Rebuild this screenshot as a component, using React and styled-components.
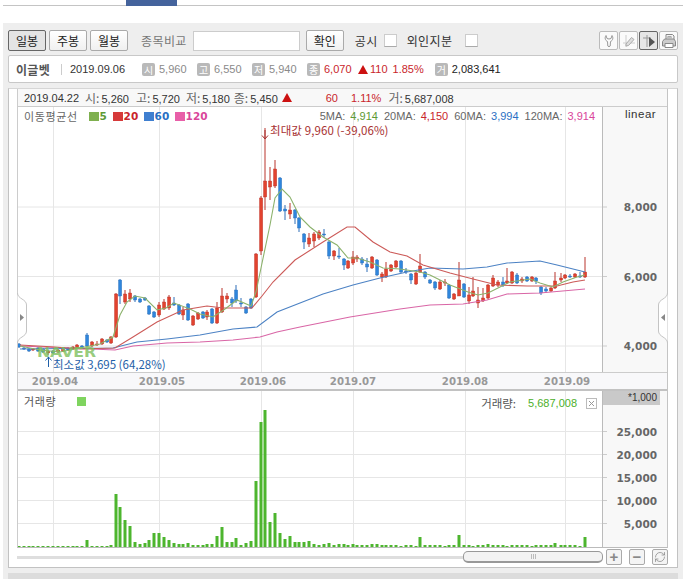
import React from 'react'
import styled, { createGlobalStyle } from 'styled-components'
import { RefreshCw } from 'lucide-react'

const KR = `"Noto Sans CJK KR", "Liberation Sans", sans-serif`
const NUM = `"Liberation Sans", "Noto Sans CJK KR", sans-serif`
const RED = '#c9252b'
const GREEN = '#4caf2a'
const MA_GREEN = '#5e9a35'
const MA_BLUE = '#2a6fc4'
const MA_PINK = '#d9469a'

// x, body top, body bottom, wick top, wick bottom, r/b, volume bar top (page pixels)
const candles = [
  [19,344,347,343,348,'b',545],[24,348,349,347,350,'b',545],[29,349,351,348,352,'b',545],
  [33,349,350,348,351,'r',545],[38,348,351,347,352,'b',545],[43,349,352,348,353,'b',545],
  [48,351,353,350,355,'r',545],[53,351,353,350,354,'b',545],[58,350,352,349,353,'r',545],
  [63,349,351,348,352,'r',545],[68,348,350,347,351,'b',545],[73,347,349,346,350,'r',545],
  [77,345,348,344,349,'r',545],[82,346,347,345,348,'b',545],[87,335,346,333,347,'b',539],
  [92,342,346,341,347,'r',545],[97,344,345,341,346,'r',545],[102,339,344,338,345,'r',545],
  [107,340,342,339,343,'b',545],[111,337,343,336,344,'r',544],[116,294,337,293,338,'r',493],
  [120,280,296,279,304,'b',506],[125,294,302,290,304,'r',519],[130,293,299,289,302,'r',525],
  [135,296,300,295,302,'b',541],[140,299,302,298,303,'b',543],[145,298,300,297,301,'b',542],
  [149,306,314,305,315,'b',539],[154,312,317,311,318,'b',532],[159,305,315,302,317,'r',532],
  [164,302,309,299,310,'r',536],[169,297,308,295,310,'r',539],[174,303,305,297,306,'b',542],
  [179,305,314,304,315,'b',543],[183,310,315,307,320,'r',543],[188,304,320,303,321,'b',542],
  [193,316,325,315,326,'r',544],[198,313,319,312,320,'r',544],[203,312,318,311,319,'b',544],
  [207,312,317,310,320,'r',543],[212,309,323,308,324,'b',543],[217,308,323,302,324,'r',535],
  [222,296,312,288,313,'r',526],[227,296,299,293,303,'r',541],[232,299,303,297,307,'b',541],
  [236,290,301,285,303,'b',537],[241,303,304,298,307,'b',544],[246,307,313,306,314,'b',542],
  [251,299,308,298,309,'b',540],[256,254,297,253,298,'r',480],[261,198,251,196,255,'r',421],
  [265,181,197,128,210,'r',409],[270,181,187,167,200,'r',521],[275,169,186,160,188,'r',512],
  [280,178,211,177,212,'b',532],[285,209,211,205,220,'b',538],[290,210,214,203,219,'r',535],
  [295,210,218,209,224,'b',541],[299,218,228,217,232,'b',541],[304,234,242,233,249,'b',541],
  [309,238,244,233,247,'r',540],[314,234,241,232,247,'r',543],[319,232,238,230,240,'r',544],
  [324,234,235,229,238,'b',543],[329,242,256,241,259,'b',542],[334,251,256,250,260,'r',544],
  [339,256,257,248,259,'b',543],[344,259,265,258,270,'b',543],[348,261,268,260,269,'r',544],
  [353,257,263,251,265,'r',543],[357,257,259,255,262,'r',544],[362,259,263,257,265,'b',544],
  [367,264,267,258,272,'b',544],[372,257,268,256,269,'r',543],[377,260,275,259,276,'b',543],
  [382,274,277,272,282,'r',544],[386,269,277,262,278,'r',544],[391,265,271,264,272,'r',544],
  [396,261,267,260,268,'r',544],[401,261,272,260,273,'b',545],[406,271,272,268,274,'b',544],
  [411,274,280,273,284,'b',544],[416,273,284,272,285,'r',545],[420,266,272,254,273,'r',536],
  [425,272,277,271,279,'b',544],[430,280,283,279,284,'b',544],[435,282,288,281,290,'b',544],
  [440,282,289,280,290,'r',544],[445,282,283,279,286,'r',545],[449,285,298,284,299,'b',544],
  [454,294,299,293,300,'r',544],[459,280,296,262,296,'r',534],[464,284,297,283,298,'b',544],
  [469,295,301,287,304,'r',544],[473,291,296,277,297,'r',545],[478,300,303,287,308,'r',544],
  [483,298,301,288,302,'r',544],[488,285,298,284,299,'r',543],[493,278,286,275,287,'r',544],
  [498,282,285,280,287,'r',544],[503,282,285,277,287,'b',544],[507,281,283,268,284,'r',545],
  [512,272,283,271,284,'r',544],[517,275,283,273,284,'b',544],[522,279,281,277,283,'r',544],
  [527,277,281,276,282,'b',544],[532,277,281,276,282,'r',545],[536,278,281,277,284,'b',544],
  [541,287,293,286,295,'b',544],[546,289,291,287,293,'b',544],[551,288,291,287,292,'r',544],
  [555,281,288,272,289,'r',542],[561,278,280,273,282,'r',544],[565,275,278,274,279,'r',544],
  [570,276,277,274,278,'b',544],[575,274,277,273,278,'r',544],[580,276,277,272,278,'b',545],
  [585,272,277,257,278,'r',536]
]

const ma5 = '20,346 40,350 60,352 80,348 100,344 113,337 120,315 127,302 135,296 145,298 157,310 166,308 174,303 190,309 200,314 213,317 225,309 237,300 251,306 256,292 261,268 270,225 275,198 282,189 290,197 300,217 310,227 323,237 337,245 348,258 357,258 370,262 383,268 400,269 420,272 430,275 450,285 468,292 478,295 488,293 500,287 510,282 530,279 540,283 553,287 563,282 577,277 585,275'
const ma20 = '20,345 55,347 80,349 115,348 133,337 157,322 183,310 207,306 223,308 252,308 262,296 273,282 295,260 323,242 347,227 355,227 373,242 390,252 407,256 423,265 450,273 473,279 497,285 527,286 557,286 573,282 585,280'
const ma60 = '20,349 113,348 137,342 167,339 200,335 233,329 257,327 277,312 300,303 323,294 353,285 380,278 407,272 430,268 463,269 487,267 507,263 540,261 557,265 585,272'
const ma120 = '20,346 67,348 115,350 133,346 167,343 200,342 233,340 260,337 277,332 300,327 350,317 400,309 430,305 463,304 487,300 507,294 540,293 585,289'

const monthGrid = [53, 159, 261, 353, 465, 565]
const months = [
  { x: 55, label: '2019.04' }, { x: 162, label: '2019.05' }, { x: 263, label: '2019.06' },
  { x: 353, label: '2019.07' }, { x: 465, label: '2019.08' }, { x: 567, label: '2019.09' }
]
const priceTicks = [{ y: 207, label: '8,000' }, { y: 276.5, label: '6,000' }, { y: 346, label: '4,000' }]
const volumeTicks = [
  { y: 430.5, label: '25,000' }, { y: 453.5, label: '20,000' }, { y: 476.5, label: '15,000' },
  { y: 499.5, label: '10,000' }, { y: 522.5, label: '5,000' }
]

const GlobalStyle = createGlobalStyle`
  html, body {
    margin: 0;
    padding: 0;
    background: #fff;
    overflow: hidden;
  }
  body {
    font-family: ${KR};
    font-size: 12px;
    color: #333;
  }
`

const Page = styled.div`
  width: 695px;
  height: 579px;
  overflow: hidden;
`

const TopBar = styled.div`
  box-sizing: border-box;
  height: 6px;
  width: 680px;
  margin: 0 0 17px 3px;
  padding-left: 123px;
  border-bottom: 1px solid #c4c4c4;
`

const TopTab = styled.div`
  width: 51px;
  height: 6px;
  background: #44639c;
`

const Panel = styled.div`
  width: 670px;
  height: 560px;
  margin-left: 3px;
  padding: 7px 5px 0;
  background: #eeeeee;
`

const Toolbar = styled.div`
  display: flex;
  align-items: center;
  height: 21px;
  margin-bottom: 4px;
`

const PeriodButton = styled.button`
  width: 38px;
  height: 21px;
  padding: 0;
  margin: 0 3px 0 ${p => p.$left || 0}px;
  font: 12px ${KR};
  line-height: 18px;
  color: #222;
  border-radius: 2px;
  border: 1px solid ${p => (p.$active ? '#666' : '#aaa')};
  background: ${p => (p.$active ? '#e4e4e4' : 'linear-gradient(#fff, #f0f0f0)')};
`

const ToolLabel = styled.span`
  font-size: 12px;
  color: ${p => (p.$muted ? '#777' : '#333')};
  margin-left: ${p => p.$left || 0}px;
  letter-spacing: 0.4px;
`

const CompareInput = styled.input`
  width: 105px;
  height: 18px;
  margin-left: 6px;
  padding: 0;
  border: 1px solid #ccc;
  background: #fff;
`

const CheckBox = styled.span`
  width: 11px;
  height: 11px;
  margin-left: ${p => p.$left}px;
  background: #fff;
  border: 1px solid #ccc;
  border-bottom-color: #aaa;
`

const IconGroup = styled.div`
  display: flex;
  gap: 1px;
  margin-left: auto;
`

const IconButton = styled.div`
  box-sizing: border-box;
  width: 19px;
  height: 19px;
  display: flex;
  align-items: center;
  justify-content: center;
  border-radius: 2px;
  border: 1px solid ${p => (p.$active ? '#666' : '#bbb')};
  background: ${p => (p.$active ? '#e6e6e6' : '#fafafa')};
`

const InfoBox = styled.div`
  height: 26px;
  display: flex;
  align-items: center;
  padding-left: 7px;
  border: 1px solid #c8c8c8;
  border-radius: 2px;
  background: #fff;
  margin-bottom: 5px;
  font-family: ${NUM};
  font-size: 11px;
`

const StockName = styled.span`
  width: 45px;
  font: bold 12px ${KR};
  color: #555;
  letter-spacing: 0.3px;
`

const Divider = styled.span`
  width: 1px;
  height: 11px;
  background: #ccc;
  margin-right: 8px;
`

const InfoDate = styled.span`
  width: 72px;
  color: #333;
`

const Stat = styled.span`
  display: flex;
  align-items: center;
  width: ${p => p.$width}px;
  margin-left: ${p => p.$left || 0}px;
  color: ${p => p.$color || '#8a8a8a'};
`

const Badge = styled.span`
  width: 13px;
  height: 13px;
  margin-right: 4px;
  border-radius: 2px;
  background: #b9b9b9;
  color: #fff;
  font: 10px/13px ${KR};
  text-align: center;
`

const UpTriangle = styled.span`
  display: inline-block;
  width: 0;
  height: 0;
  margin-left: ${p => p.$left || 0}px;
  border-left: 5px solid transparent;
  border-right: 5px solid transparent;
  border-bottom: 9px solid #cc1111;
`

const Change = styled.span`
  margin-left: ${p => p.$left || 0}px;
  color: ${p => p.$color || RED};
`

const ChartFrame = styled.div`
  position: relative;
  width: 651px;
  height: 478px;
  border: 1px solid #c2c2c2;
  border-top-color: #d6d6d6;
  background: #fff;
  padding: 0 9px 0 8px;
`

const ChartBody = styled.div`
  height: 100%;
  display: flex;
  flex-direction: column;
`

const ChartColumn = styled.div`
  border-left: 1px solid #ccc;
  border-right: 1px solid #c4c4c4;
  border-bottom: 1px solid #bbb;
`

const QuoteRow = styled.div`
  height: 17px;
  display: flex;
  align-items: center;
  padding-left: 6px;
  background: #f8f8f8;
  border-bottom: 1px solid #ccc;
  font: 11px ${NUM};
  color: #333;
  white-space: nowrap;
`

const QuoteItem = styled.span`
  margin-left: ${p => p.$left || 0}px;
  color: ${p => p.$color || 'inherit'};
`

const QuoteKey = styled.span`
  font: 12px ${KR};
  color: #666;
  margin-right: 2px;
`

const ChartRow = styled.div`
  display: flex;
  height: ${p => p.$height}px;
`

const Plot = styled.div`
  position: relative;
  box-sizing: border-box;
  width: 585px;
  height: 100%;
  border-right: 1px solid #bbb;
  svg {
    display: block;
  }
`

const Axis = styled.div`
  position: relative;
  flex: 1;
  background: #f8f8f8;
`

const AxisOverlay = styled.svg`
  position: absolute;
  top: 0;
  left: 0;
  display: block;
`

const LinearLabel = styled.div`
  padding-left: 22px;
  font: 11.5px/14px ${NUM};
  letter-spacing: 0.5px;
  color: #333;
`

const Legend = styled.div`
  position: absolute;
  top: 2px;
  left: 6px;
  display: flex;
  align-items: center;
  font: 11px/14px ${KR};
  color: #666;
  letter-spacing: 0.6px;
`

const LegendName = styled.span`
  margin-right: 11px;
`

const LegendKey = styled.span`
  display: flex;
  align-items: center;
  width: ${p => p.$width}px;
  font: bold 10.5px "DejaVu Sans", sans-serif;
  letter-spacing: 0;
  color: ${p => p.$color};
  &::before {
    content: '';
    width: 10px;
    height: 9px;
    margin-right: 1px;
    background: ${p => p.$swatch};
  }
`

const MaValues = styled.div`
  position: absolute;
  top: 2px;
  right: 7px;
  font: 11px/14px ${NUM};
  color: #666;
  white-space: nowrap;
`

const MaValue = styled.span`
  margin: 0 6px 0 5px;
  color: ${p => p.$color};
  &:last-child {
    margin-right: 0;
  }
`

const TimeRow = styled.div`
  height: 16px;
  border-top: 1px solid #ccc;
  border-bottom: 2px solid #c2c2c2;
  background: #f8f8fa;
  svg {
    display: block;
  }
`

const VolumeLegend = styled.div`
  position: absolute;
  top: 3px;
  left: 6px;
  display: flex;
  align-items: center;
  font: 11px/14px ${KR};
  color: #555;
  letter-spacing: 0.6px;
  &::after {
    content: '';
    width: 9px;
    height: 9px;
    margin-left: 21px;
    background: #7fd45f;
  }
`

const VolumeReadout = styled.div`
  position: absolute;
  top: 5px;
  right: 5px;
  display: flex;
  align-items: center;
  font: 11.5px/14px ${KR};
  color: #555;
  b {
    margin-left: 12px;
    font: 11px ${NUM};
    color: ${GREEN};
  }
`

const CloseBox = styled.svg`
  margin-left: 9px;
  border: 1px solid #bbb;
`

const UnitCell = styled.div`
  box-sizing: border-box;
  width: 57px;
  height: 14px;
  background: #c9c9c9;
  text-align: right;
  padding-right: 3px;
  font: 10px/14px ${NUM};
  color: #333;
`

const ScrollRow = styled.div`
  flex: 1;
  display: flex;
  align-items: center;
  padding-bottom: 1px;
`

const ScrollTrack = styled.div`
  width: 446px;
  height: 3px;
  background: #dedede;
`

const ScrollThumb = styled.div`
  width: 138px;
  height: 9px;
  border: 1px solid #999;
  border-bottom-width: 2px;
  border-radius: 5px;
  background: #f3f3f3;
  display: flex;
  justify-content: center;
  gap: 1px;
  align-items: center;
  span {
    width: 1px;
    height: 5px;
    background: #bbb;
  }
`

const ScrollButton = styled.div`
  width: 14px;
  height: 14px;
  margin-left: ${p => p.$left}px;
  border: 1px solid #aaa;
  border-radius: 2px;
  background: #f4f4f4;
  display: flex;
  align-items: center;
  justify-content: center;
  color: #888;
  font: bold 15px/14px ${NUM};
`

const Handle = styled.svg`
  position: absolute;
  top: 204px;
  ${p => (p.$side === 'left' ? 'left: 8px;' : 'right: 9px;')}
`

const BottomStrip = styled.div`
  height: 8px;
  margin-top: 5px;
  background: #dcdcdc;
`

const CandleChart = () => (
  <svg width="584" height="265" viewBox="18 107 584 265">
    {priceTicks.map(t => (
      <line key={t.y} x1="18" x2="603" y1={t.y} y2={t.y} stroke="#e6e6e6" />
    ))}
    {monthGrid.map(x => (
      <line key={x} x1={x + 0.5} x2={x + 0.5} y1="107" y2="372" stroke="#e6e6e6" />
    ))}
    {candles.map(([x, top, bottom, wickTop, wickBottom, dir]) => {
      const wick = dir === 'r' ? '#b9352c' : '#2f6fb8'
      const fill = dir === 'r' ? '#e2432f' : '#2f86dc'
      return (
        <g key={x}>
          <line x1={x} x2={x} y1={wickTop} y2={wickBottom} stroke={wick} strokeWidth="1" />
          <rect x={x - 1.5} y={top} width="3.2" height={Math.max(bottom - top, 1)} fill={fill} stroke={wick} strokeWidth="0.4" />
        </g>
      )
    })}
    <polyline points={ma120} fill="none" stroke="#d966a6" strokeWidth="1.1" />
    <polyline points={ma60} fill="none" stroke="#4c82c4" strokeWidth="1.1" />
    <polyline points={ma20} fill="none" stroke="#cc5a58" strokeWidth="1.1" />
    <polyline points={ma5} fill="none" stroke="#8cb26c" strokeWidth="1.1" />
    <text x="37" y="357" fontFamily="DejaVu Sans" fontWeight="bold" fontSize="14" fill="#7fc060" opacity="0.8" textLength="59" lengthAdjust="spacingAndGlyphs">NAVER</text>
    <path d="M265 130V139M262 135.500L265 139L268 135.500" fill="none" stroke="#a83232" />
    <text x="270" y="135" fontFamily={KR} fontSize="11.500" fill="#a83232" letterSpacing="0.1">최대값 9,960 (-39,06%)</text>
    <path d="M48.500 367V357M45.500 360.500L48.500 357L51.500 360.500" fill="none" stroke="#1f5fa8" />
    <text x="53" y="369" fontFamily={KR} fontSize="11.500" fill="#1f5fa8">최소값 3,695 (64,28%)</text>
  </svg>
)

const VolumeChart = () => (
  <svg width="584" height="156" viewBox="18 390 584 156">
    {volumeTicks.map(t => (
      <line key={t.y} x1="18" x2="603" y1={t.y} y2={t.y} stroke="#e6e6e6" />
    ))}
    {monthGrid.map(x => (
      <line key={x} x1={x + 0.5} x2={x + 0.5} y1="390" y2="546" stroke="#e6e6e6" />
    ))}
    {candles.map(([x, , , , , , volTop]) => (
      <rect key={x} x={x - 1.5} y={volTop} width="3" height={546 - volTop} fill="#4db52e" />
    ))}
  </svg>
)

const AxisTicks = ({ ticks, height, origin }) => (
  <AxisOverlay width="65" height={height} viewBox={`602 ${origin} 65 ${height}`}>
    {ticks.map(t => (
      <g key={t.y}>
        <line x1="602" x2="606" y1={t.y} y2={t.y} stroke="#ccc" />
        <text x="656" y={t.y + 4} textAnchor="end" fontFamily="DejaVu Sans" fontWeight="bold" fontSize="10.500" fill="#666">{t.label}</text>
      </g>
    ))}
  </AxisOverlay>
)

const App = () => (
  <Page>
    <GlobalStyle />
    <TopBar><TopTab /></TopBar>
    <Panel>
      <Toolbar>
        <PeriodButton $active>일봉</PeriodButton>
        <PeriodButton>주봉</PeriodButton>
        <PeriodButton>월봉</PeriodButton>
        <ToolLabel $muted $left={10}>종목비교</ToolLabel>
        <CompareInput />
        <PeriodButton $left={6}>확인</PeriodButton>
        <ToolLabel $left={8}>공시</ToolLabel>
        <CheckBox $left={6} />
        <ToolLabel $left={10}>외인지분</ToolLabel>
        <CheckBox $left={13} />
        <IconGroup>
          <IconButton>
            <svg width="14" height="14" viewBox="0 0 14 14" fill="none" stroke="#999">
              <path d="M4 1.500C2.500 3.500 3 6.500 5.500 7.500L5.800 12Q7 13.500 8.200 12L8.500 7.500C11 6.500 11.500 3.500 10 1.500L9 4.500Q7 5.500 5 4.500Z" />
            </svg>
          </IconButton>
          <IconButton>
            <svg width="14" height="14" viewBox="0 0 14 14" fill="none" stroke="#aaa">
              <path d="M4 1V13M1 9H13" stroke="#ccc" />
              <path d="M4 10L9.500 3.500L12 5.500L6.500 11.500L4 12Z" fill="#ddd" />
            </svg>
          </IconButton>
          <IconButton $active>
            <svg width="14" height="14" viewBox="0 0 14 14" fill="none">
              <path d="M5 1V13M1 4H9" stroke="#999" />
              <path d="M7 3L13 8L7 13Z" fill="#555" />
            </svg>
          </IconButton>
          <IconButton>
            <svg width="16" height="16" viewBox="0 0 16 16" fill="none" stroke="#888">
              <path d="M5 6V1.500H11.500L13 3V6" fill="#f4f4f4" />
              <path d="M1.500 8.500L3.500 6H13L14.500 8.500V13H1.500Z" fill="#ccc" />
              <path d="M4 10.500H12V14.500H4Z" fill="#fff" />
              <path d="M6.500 3.500H10.500M6 4.800H11" stroke="#aaa" />
            </svg>
          </IconButton>
        </IconGroup>
      </Toolbar>
      <InfoBox>
        <StockName>이글벳</StockName>
        <Divider />
        <InfoDate>2019.09.06</InfoDate>
        <Stat $width={55}><Badge>시</Badge>5,960</Stat>
        <Stat $width={55}><Badge>고</Badge>6,550</Stat>
        <Stat $width={55}><Badge>저</Badge>5,940</Stat>
        <Stat $width={51} $color={RED}><Badge>종</Badge>6,070</Stat>
        <UpTriangle />
        <Change $left={2}>110</Change>
        <Change $left={5}>1.85%</Change>
        <Stat $width={17} $left={11}><Badge>거</Badge></Stat>
        <Change $color="#222">2,083,641</Change>
      </InfoBox>
      <ChartFrame>
        <ChartBody>
          <ChartColumn>
            <QuoteRow>
              <QuoteItem>2019.04.22</QuoteItem>
              <QuoteItem $left={6}><QuoteKey>시:</QuoteKey>5,260</QuoteItem>
              <QuoteItem $left={7}><QuoteKey>고:</QuoteKey>5,720</QuoteItem>
              <QuoteItem $left={6}><QuoteKey>저:</QuoteKey>5,180</QuoteItem>
              <QuoteItem $left={4}><QuoteKey>종:</QuoteKey>5,450</QuoteItem>
              <UpTriangle $left={4} />
              <QuoteItem $left={34} $color={RED}>60</QuoteItem>
              <QuoteItem $left={13} $color={RED}>1.11%</QuoteItem>
              <QuoteItem $left={7}><QuoteKey>거:</QuoteKey>5,687,008</QuoteItem>
            </QuoteRow>
            <ChartRow $height={265}>
              <Plot>
                <CandleChart />
                <Legend>
                  <LegendName>이동평균선</LegendName>
                  <LegendKey $width={24} $swatch="#7fb04f" $color={MA_GREEN}>5</LegendKey>
                  <LegendKey $width={31} $swatch="#d63a3a" $color={RED}>20</LegendKey>
                  <LegendKey $width={31} $swatch="#3f7fd0" $color={MA_BLUE}>60</LegendKey>
                  <LegendKey $width={40} $swatch="#e85fa8" $color={MA_PINK}>120</LegendKey>
                </Legend>
                <MaValues>
                  5MA:<MaValue $color={MA_GREEN}>4,914</MaValue>
                  20MA:<MaValue $color={RED}>4,150</MaValue>
                  60MA:<MaValue $color={MA_BLUE}>3,994</MaValue>
                  120MA:<MaValue $color={MA_PINK}>3,914</MaValue>
                </MaValues>
              </Plot>
              <Axis>
                <LinearLabel>linear</LinearLabel>
                <AxisTicks ticks={priceTicks} height={265} origin={107} />
              </Axis>
            </ChartRow>
            <TimeRow>
              <svg width="650" height="16" viewBox="18 372 650 16">
                {months.map(m => (
                  <text key={m.label} x={m.x} y="384" textAnchor="middle" fontFamily="DejaVu Sans" fontWeight="bold" fontSize="10.200" fill="#999">{m.label}</text>
                ))}
              </svg>
            </TimeRow>
            <ChartRow $height={156}>
              <Plot>
                <VolumeChart />
                <VolumeLegend>거래량</VolumeLegend>
                <VolumeReadout>
                  거래량:<b>5,687,008</b>
                  <CloseBox width="9" height="9" viewBox="0 0 9 9">
                    <path d="M2 2L7 7M7 2L2 7" stroke="#999" />
                  </CloseBox>
                </VolumeReadout>
              </Plot>
              <Axis>
                <UnitCell>*1,000</UnitCell>
                <AxisTicks ticks={volumeTicks} height={156} origin={390} />
              </Axis>
            </ChartRow>
          </ChartColumn>
          <ScrollRow>
            <ScrollTrack />
            <ScrollThumb><span /><span /><span /></ScrollThumb>
            <ScrollButton $left={3}>+</ScrollButton>
            <ScrollButton $left={7}>−</ScrollButton>
            <ScrollButton $left={7}><RefreshCw size={12} strokeWidth={1.5} /></ScrollButton>
          </ScrollRow>
        </ChartBody>
        <Handle $side="left" width="10" height="50" viewBox="0 0 10 50">
          <path d="M0.500 0C0.500 6 9.500 6 9.500 12V38C9.500 44 0.500 44 0.500 50Z" fill="#fff" />
          <path d="M0.500 0C0.500 6 9.500 6 9.500 12V38C9.500 44 0.500 44 0.500 50" fill="none" stroke="#c4c4c4" />
          <path d="M3 21L7 24.500L3 28Z" fill="#888" />
        </Handle>
        <Handle $side="right" width="10" height="50" viewBox="0 0 10 50">
          <path d="M9.500 0C9.500 6 0.500 6 0.500 12V38C0.500 44 9.500 44 9.500 50Z" fill="#fff" />
          <path d="M9.500 0C9.500 6 0.500 6 0.500 12V38C0.500 44 9.500 44 9.500 50" fill="none" stroke="#c4c4c4" />
          <path d="M7 21L3 24.500L7 28Z" fill="#888" />
        </Handle>
      </ChartFrame>
      <BottomStrip />
    </Panel>
  </Page>
)

export default App
